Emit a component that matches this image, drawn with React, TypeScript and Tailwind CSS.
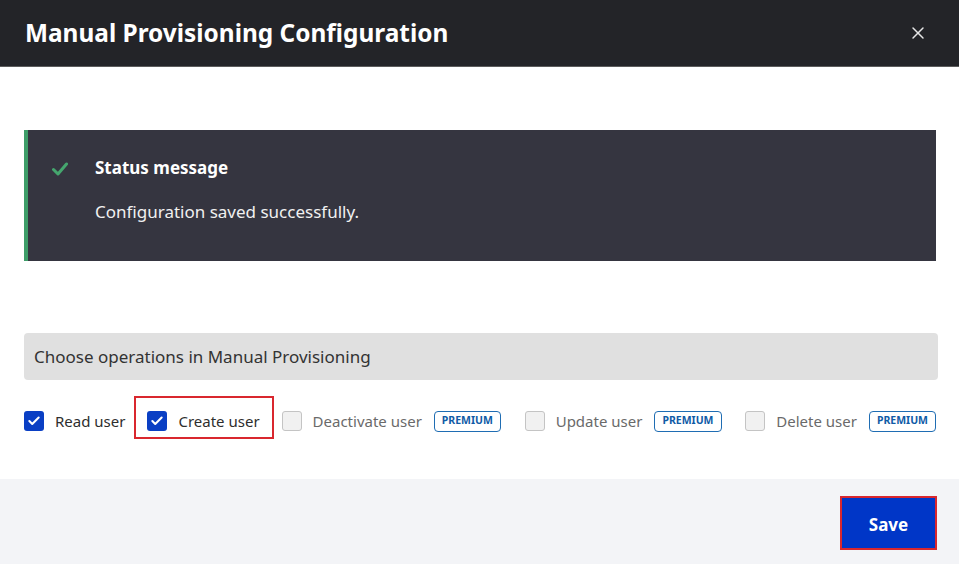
import { Check, X } from "lucide-react";

const font = { fontFamily: '"Noto Sans", "Open Sans", sans-serif' };

function Box({ checked }: { checked: boolean }) {
  return checked ? (
    <span className="flex h-5 w-5 shrink-0 items-center justify-center rounded-[3px] bg-[#0a3fc4]">
      <Check size={14} strokeWidth={3.5} className="text-white" />
    </span>
  ) : (
    <span className="h-5 w-5 shrink-0 rounded-[3px] border border-[#c4c4c4] bg-[#f1f1f1]" />
  );
}

function Premium() {
  return (
    <span className="flex h-[21px] items-center rounded-[4px] border border-[#1f6db3] px-[7px] text-[10.5px] font-bold text-[#105ba6]">
      PREMIUM
    </span>
  );
}

function Op({ label, checked, premium }: { label: string; checked?: boolean; premium?: boolean }) {
  return (
    <div className="flex items-center">
      <Box checked={!!checked} />
      <span className={`ml-[11px] text-[15px] ${premium ? "text-[#6a6a6a]" : "text-[#2e2e2e]"}`}>{label}</span>
      {premium && <span className="ml-[12px]"><Premium /></span>}
    </div>
  );
}

export default function App() {
  return (
    <div className="flex h-[564px] w-[959px] flex-col bg-white" style={font}>
      {/* Header */}
      <div className="flex h-[67px] shrink-0 items-center justify-between border-b border-[#5c5c5c] bg-[#232428] pl-[25px] pr-[31px]">
        <h1 className="text-[24.4px] font-bold text-white">Manual Provisioning Configuration</h1>
        <X size={20} strokeWidth={1.75} className="text-[#e6e6e6]" />
      </div>

      {/* Body */}
      <div className="flex flex-1 flex-col pl-[24px] pr-[21px] pt-[63px]">
        <div className="mr-[2px] flex h-[131px] border-l-4 border-[#3e9d68] bg-[#353540]">
          <div className="pl-[24px] pt-[32px]">
            <svg width="16" height="14" viewBox="0 0 16 14" fill="none">
              <path d="M1.5 7.5 L6 12 L14.5 2" stroke="#45a66e" strokeWidth="3" strokeLinecap="round" strokeLinejoin="round" />
            </svg>
          </div>
          <div className="pl-[27px] pt-[25px] text-white">
            <div className="text-[17px] font-bold">Status message</div>
            <div className="mt-[18px] text-[17px] text-[#f0f0f0]">Configuration saved successfully.</div>
          </div>
        </div>

        <div className="mt-[72px] flex h-[47px] items-center rounded-[4px] bg-[#e0e0e0] px-[10px] text-[17px] text-[#333]">
          Choose operations in Manual Provisioning
        </div>

        <div className="mt-[16px] flex h-[43px] items-center pr-[2px]">
          <div className="mt-[7px]">
            <Op label="Read user" checked />
          </div>
          <div className="ml-[9px] flex h-[43px] items-center border-2 border-[#d9272e] pl-[11px] pr-[12px] pt-[7px]">
            <Op label="Create user" checked />
          </div>
          <div className="ml-[8px] mt-[7px]">
            <Op label="Deactivate user" premium />
          </div>
          <div className="ml-auto mt-[7px]">
            <Op label="Update user" premium />
          </div>
          <div className="ml-auto mt-[7px]">
            <Op label="Delete user" premium />
          </div>
        </div>
      </div>

      {/* Footer */}
      <div className="flex h-[85px] shrink-0 items-start justify-end bg-[#f3f4f7] pr-[22px] pt-[17px]">
        <button className="h-[54px] w-[97px] border-2 border-[#d9272e] bg-[#0036c7] pt-[3px] text-[17px] font-bold text-white">
          Save
        </button>
      </div>
    </div>
  );
}
